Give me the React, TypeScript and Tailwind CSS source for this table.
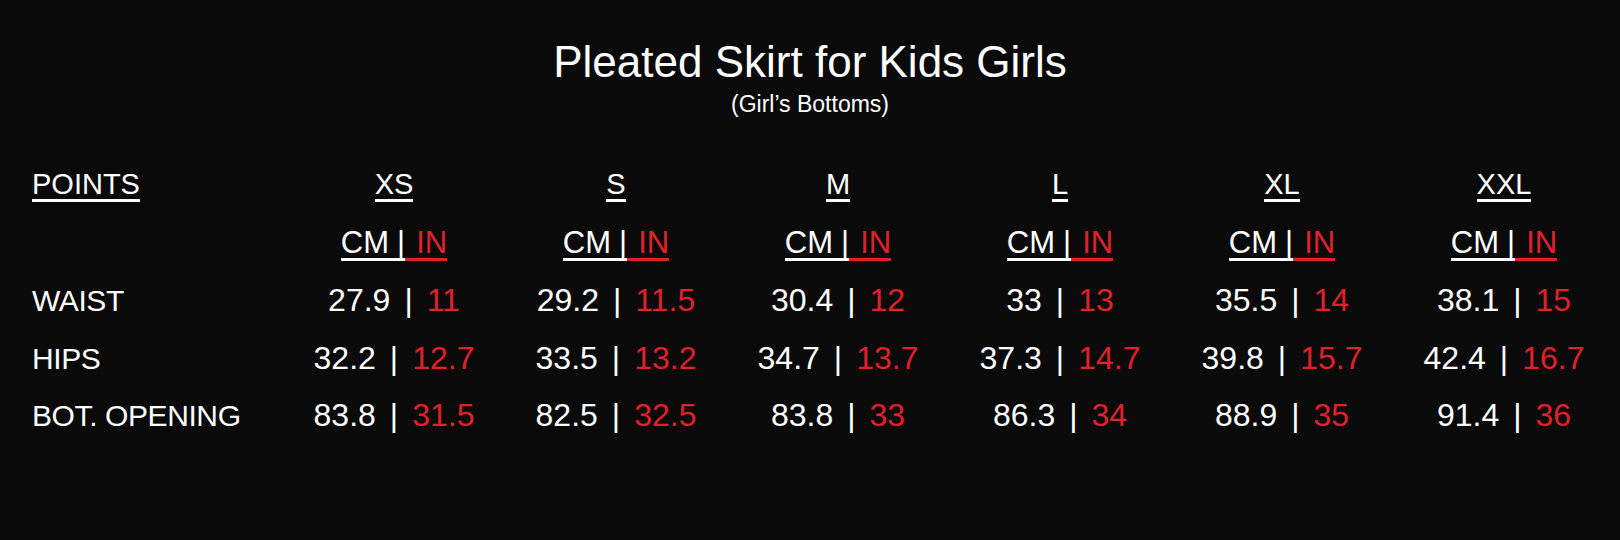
import React from 'react';

type Row = {
  label: string;
  values: [string, string][];
};

const sizes = ['XS', 'S', 'M', 'L', 'XL', 'XXL'];

const rows: Row[] = [
  {
    label: 'WAIST',
    values: [
      ['27.9', '11'],
      ['29.2', '11.5'],
      ['30.4', '12'],
      ['33', '13'],
      ['35.5', '14'],
      ['38.1', '15'],
    ],
  },
  {
    label: 'HIPS',
    values: [
      ['32.2', '12.7'],
      ['33.5', '13.2'],
      ['34.7', '13.7'],
      ['37.3', '14.7'],
      ['39.8', '15.7'],
      ['42.4', '16.7'],
    ],
  },
  {
    label: 'BOT. OPENING',
    values: [
      ['83.8', '31.5'],
      ['82.5', '32.5'],
      ['83.8', '33'],
      ['86.3', '34'],
      ['88.9', '35'],
      ['91.4', '36'],
    ],
  },
];

const gridCols = 'grid grid-cols-[251px_repeat(6,222px)]';

const App: React.FC = () => {
  return (
    <div className="w-full h-[540px] bg-[#0a0a0a] text-white font-['Liberation_Sans',Arial,sans-serif] overflow-hidden">
      {/* title */}
      <div className="pt-[40px] flex flex-col items-center">
        <h1 className="text-[44px] leading-[44px] font-normal">Pleated Skirt for Kids Girls</h1>
        <p className="mt-[9px] text-[23px] leading-[23px]">(Girl&rsquo;s Bottoms)</p>
      </div>

      <div className="pl-[32px] mt-[54px]">
        {/* size header */}
        <div className={`${gridCols} text-[29px] leading-[29px]`}>
          <div>
            <span className="inline-block border-b-[3px] border-white">POINTS</span>
          </div>
          {sizes.map(size => (
            <div key={size} className="text-center">
              <span className="inline-block border-b-[3px] border-white">{size}</span>
            </div>
          ))}
        </div>

        {/* unit header */}
        <div className={`${gridCols} mt-[26px] text-[31px] leading-[30px]`}>
          <div />
          {sizes.map(size => (
            <div key={size} className="flex justify-center">
              <span className="inline-block border-b-[3px] border-white whitespace-nowrap">
                CM<span className="ml-[8px]">|</span>
              </span>
              <span className="inline-block border-b-[3px] border-[#e0202b] text-[#e0202b] pl-[11px]">IN</span>
            </div>
          ))}
        </div>

        {/* measurements */}
        <div className="mt-[11px]">
          {rows.map(row => (
            <div key={row.label} className={`${gridCols} items-baseline leading-[57.5px]`}>
              <div className="text-[30px] tracking-[-0.4px] whitespace-nowrap">{row.label}</div>
              {row.values.map(([cm, inch], i) => (
                <div key={i} className="text-center text-[32px] whitespace-nowrap">
                  <span>{cm}</span>
                  <span className="mx-[14px]">|</span>
                  <span className="text-[#e0202b]">{inch}</span>
                </div>
              ))}
            </div>
          ))}
        </div>
      </div>
    </div>
  );
};

export default App;
